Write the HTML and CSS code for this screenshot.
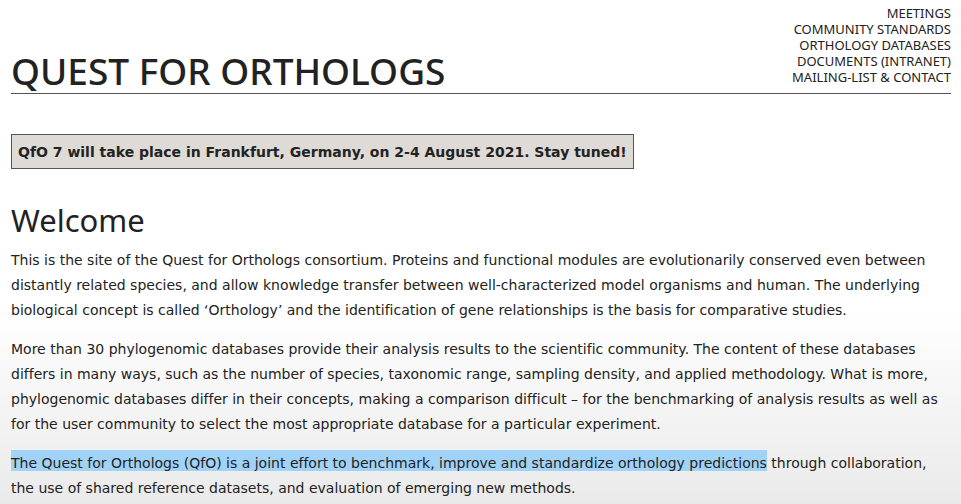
FILE: index.html
```html
<!DOCTYPE html>
<html lang="en">
<head>
<meta charset="utf-8">
<meta name="viewport" content="width=device-width, initial-scale=1">
<title>Quest for Orthologs</title>
<link rel="stylesheet" href="styles.css">
</head>
<body>
<header class="site-header">
  <h1 class="site-title">QUEST FOR ORTHOLOGS</h1>
  <nav class="site-nav">
    <a href="#meetings">MEETINGS</a>
    <a href="#standards">COMMUNITY STANDARDS</a>
    <a href="#databases">ORTHOLOGY DATABASES</a>
    <a href="#documents">DOCUMENTS (INTRANET)</a>
    <a href="#contact">MAILING-LIST &amp; CONTACT</a>
  </nav>
</header>
<main>
  <p class="notice">QfO 7 will take place in Frankfurt, Germany, on 2-4 August 2021. Stay tuned!</p>
  <h2 class="section-title">Welcome</h2>
  <p class="text">This is the site of the Quest for Orthologs consortium. Proteins and functional modules are evolutionarily conserved even between distantly related species, and allow knowledge transfer between well-characterized model organisms and human. The underlying biological concept is called ‘Orthology’ and the identification of gene relationships is the basis for comparative studies.</p>
  <p class="text">More than 30 phylogenomic databases provide their analysis results to the scientific community. The content of these databases differs in many ways, such as the number of species, taxonomic range, sampling density, and applied methodology. What is more, phylogenomic databases differ in their concepts, making a comparison difficult – for the benchmarking of analysis results as well as for the user community to select the most appropriate database for a particular experiment.</p>
  <p class="text"><mark class="highlight">The Quest for Orthologs (QfO) is a joint effort to benchmark, improve and standardize orthology predictions</mark> through collaboration, the use of shared reference datasets, and evaluation of emerging new methods.</p>
</main>
</body>
</html>
```
FILE: styles.css
```css
* {
  box-sizing: border-box;
}

html {
  min-height: 100%;
  background: linear-gradient(#ffffff 60%, #e9e9e9);
}

body {
  margin: 0;
  padding: 5px 10px 0 11px;
  color: #222222;
  font-family: Verdana, "DejaVu Sans", sans-serif;
  font-size: 14px;
  font-variant-ligatures: none;
  line-height: 25px;
}

.site-header {
  display: flex;
  justify-content: space-between;
  align-items: flex-end;
  border-bottom: 1px solid #555555;
  margin-bottom: 40px;
  padding-bottom: 8px;
}

.site-title {
  margin: 0 0 -8px;
  font-family: "Noto Sans", sans-serif;
  font-size: 37px;
  font-weight: 500;
  line-height: 44px;
}

.site-nav {
  display: flex;
  flex-direction: column;
  align-items: flex-end;
  font-family: "Noto Sans", sans-serif;
  font-size: 13px;
  line-height: 16px;
}

.site-nav a {
  color: inherit;
  text-decoration: none;
}

.notice {
  width: fit-content;
  margin: 0 0 31px;
  padding: 5px 6px 4px;
  border: 1px solid #555555;
  background: #dedad6;
  font-weight: bold;
  line-height: 24px;
}

.section-title {
  margin: 0 0 8px;
  font-family: "Noto Sans", sans-serif;
  font-size: 31px;
  font-weight: 400;
  line-height: 40px;
}

.text {
  margin: 0 0 14px;
}

.highlight {
  padding: 5px 0 0;
  background: #a1d2f8;
  color: inherit;
}
```
